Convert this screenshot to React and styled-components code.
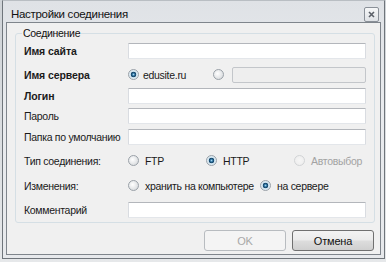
import React from "react";
import styled, { createGlobalStyle } from "styled-components";

const Global = createGlobalStyle`
  html, body { margin: 0; padding: 0; }
  body {
    width: 386px; height: 262px; overflow: hidden;
    background: #dcdfe2;
    font-family: "Liberation Sans", Arial, sans-serif;
  }
`;

const Page = styled.div`
  width: 386px;
  height: 262px;
  box-sizing: border-box;
  padding-left: 2px;
  background: linear-gradient(#cfd3d7, #e6e8ea);
`;

const Frame = styled.div`
  width: 383px;
  height: 259px;
  box-sizing: border-box;
  border: 1px solid #6f757b;
  border-top-color: #b9bec3;
  background: linear-gradient(180deg, #dfe2e6 0%, #e9ebee 40%, #e7e9ec 100%);
  padding: 0 3px 3px 3px;
  display: flex;
  flex-direction: column;
`;

const TitleBar = styled.div`
  height: 21px;
  flex: none;
  display: flex;
  align-items: flex-start;
  justify-content: space-between;
  padding: 0 2px 0 5px;
`;

const Title = styled.span`
  font-size: 11.5px;
  letter-spacing: -0.3px;
  line-height: 14px;
  margin-top: 6px;
  color: #111;
`;

const CloseBtn = styled.div`
  width: 15px;
  height: 15px;
  margin-top: 6px;
  box-sizing: border-box;
  border: 1px solid #8a9098;
  border-radius: 2px;
  background: linear-gradient(#f6f7f8, #dfe2e6);
  display: flex;
  align-items: center;
  justify-content: center;
`;

const Client = styled.div`
  flex: 1;
  border: 1px solid #7f858c;
  background: #f0f0f0;
  display: flex;
  flex-direction: column;
  padding: 10px 5px 3px 8px;
`;

const GroupBox = styled.div`
  position: relative;
  border: 1px solid #d5dfe5;
  border-radius: 3px;
  padding: 5px 8px 1px 8px;
`;

const Legend = styled.span`
  position: absolute;
  top: -7px;
  left: 6px;
  padding: 0 1px;
  background: #f0f0f0;
  font-size: 10.5px;
  letter-spacing: -0.3px;
  line-height: 13px;
  color: #111;
`;

const Row = styled.div`
  display: grid;
  grid-template-columns: 104px 1fr;
  align-items: center;
  height: ${(p) => p.$h}px;
`;

const Label = styled.span`
  font-size: 10.5px;
  letter-spacing: ${(p) => (p.$bold ? "-0.1px" : "-0.3px")};
  color: #1a1a1a;
  font-weight: ${(p) => (p.$bold ? 700 : 400)};
  white-space: nowrap;
`;

const TextBox = styled.div`
  height: 16px;
  box-sizing: border-box;
  border: 1px solid;
  border-color: ${(p) => (p.$disabled ? "#c3c6ca" : "#b3b6bb #d9dce1 #e3e6ea #d9dce1")};
  border-radius: ${(p) => (p.$disabled ? "2px" : "1px")};
  background: ${(p) => (p.$disabled ? "#eeeeee" : "#ffffff")};
  flex: ${(p) => (p.$grow ? 1 : "none")};
`;

const Options = styled.div`
  display: flex;
  align-items: center;
`;

const Option = styled.div`
  display: flex;
  align-items: center;
  gap: ${(p) => (p.$gap ?? 4)}px;
  width: ${(p) => (p.$w ? `${p.$w}px` : "auto")};
  flex: ${(p) => (p.$grow ? 1 : "none")};
`;

const Radio = styled.span`
  width: 11px;
  height: 11px;
  box-sizing: border-box;
  border-radius: 50%;
  flex: none;
  border: 1px solid ${(p) => (p.$disabled ? "#d2d4d6" : "#9aa1a8")};
  background: ${(p) =>
    p.$checked
      ? "radial-gradient(circle at 50% 50%, #9fd2ee 0, #2b6f9c 22%, #0e3a5c 40%, #cfe3ef 48%, #f2f5f7 100%)"
      : p.$disabled
      ? "radial-gradient(circle, #f6f6f6 0, #ececec 100%)"
      : "radial-gradient(circle at 40% 40%, #ffffff 0, #e2e4e6 60%, #cfd2d5 100%)"};
`;

const OptText = styled.span`
  font-size: 10.5px;
  letter-spacing: -0.3px;
  color: ${(p) => (p.$disabled ? "#a3a3a3" : "#1a1a1a")};
  white-space: nowrap;
`;

const ButtonRow = styled.div`
  margin-top: auto;
  display: flex;
  justify-content: flex-end;
  gap: 6px;
  padding-right: 1px;
`;

const Button = styled.div`
  width: 82px;
  height: 21px;
  box-sizing: border-box;
  border-radius: 3px;
  display: flex;
  align-items: center;
  justify-content: center;
  font-size: 11px;
  letter-spacing: -0.2px;
  border: 1px solid ${(p) => (p.$disabled ? "#b8bcc0" : "#707070")};
  color: ${(p) => (p.$disabled ? "#a8a8a8" : "#111")};
  background: ${(p) =>
    p.$disabled
      ? "#f4f4f4"
      : "linear-gradient(#f3f3f3 0%, #ebebeb 48%, #dddddd 52%, #cfcfcf 100%)"};
`;

export default function App() {
  return (
    <>
      <Global />
      <Page>
        <Frame>
          <TitleBar>
            <Title>Настройки соединения</Title>
            <CloseBtn>
              <svg width="7" height="7" viewBox="0 0 7 7">
                <path d="M1 1 L6 6 M6 1 L1 6" stroke="#5b6068" strokeWidth="1.6" />
              </svg>
            </CloseBtn>
          </TitleBar>
          <Client>
            <GroupBox>
              <Legend>Соединение</Legend>
              <Row $h={24}>
                <Label $bold>Имя сайта</Label>
                <TextBox />
              </Row>
              <Row $h={23}>
                <Label $bold>Имя сервера</Label>
                <Options>
                  <Option $w={85}>
                    <Radio $checked />
                    <OptText>edusite.ru</OptText>
                  </Option>
                  <Option $gap={8} $grow>
                    <Radio />
                    <TextBox $disabled $grow />
                  </Option>
                </Options>
              </Row>
              <Row $h={20}>
                <Label $bold>Логин</Label>
                <TextBox />
              </Row>
              <Row $h={20}>
                <Label>Пароль</Label>
                <TextBox />
              </Row>
              <Row $h={22}>
                <Label>Папка по умолчанию</Label>
                <TextBox />
              </Row>
              <Row $h={25}>
                <Label>Тип соединения:</Label>
                <Options>
                  <Option $w={78} $gap={6}>
                    <Radio />
                    <OptText>FTP</OptText>
                  </Option>
                  <Option $w={88} $gap={6}>
                    <Radio $checked />
                    <OptText>HTTP</OptText>
                  </Option>
                  <Option $gap={6}>
                    <Radio $disabled />
                    <OptText $disabled>Автовыбор</OptText>
                  </Option>
                </Options>
              </Row>
              <Row $h={25}>
                <Label>Изменения:</Label>
                <Options>
                  <Option $w={132} $gap={6}>
                    <Radio />
                    <OptText>хранить на компьютере</OptText>
                  </Option>
                  <Option $gap={6}>
                    <Radio $checked />
                    <OptText>на сервере</OptText>
                  </Option>
                </Options>
              </Row>
              <Row $h={23}>
                <Label>Комментарий</Label>
                <TextBox />
              </Row>
            </GroupBox>
            <ButtonRow>
              <Button $disabled>OK</Button>
              <Button>Отмена</Button>
            </ButtonRow>
          </Client>
        </Frame>
      </Page>
    </>
  );
}
